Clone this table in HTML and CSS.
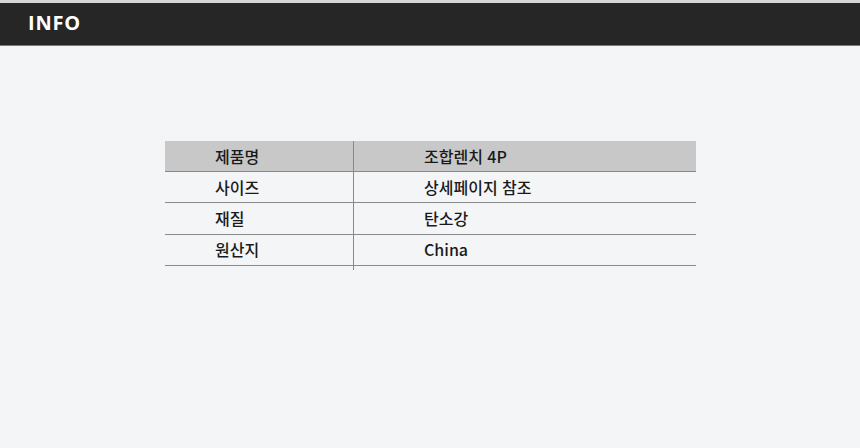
FILE: index.html
```html
<!DOCTYPE html>
<html lang="ko">
<head>
<meta charset="utf-8">
<title>INFO</title>
<link rel="stylesheet" href="styles.css">
</head>
<body>
<header class="topbar"><h1 class="title">INFO</h1></header>
<main class="content">
  <div class="info-table">
    <div class="cell key head">제품명</div><div class="cell val head">조합렌치 4P</div>
    <div class="cell key">사이즈</div><div class="cell val">상세페이지 참조</div>
    <div class="cell key">재질</div><div class="cell val">탄소강</div>
    <div class="cell key">원산지</div><div class="cell val">China</div>
    <div class="tail key"></div><div class="tail"></div>
  </div>
</main>
</body>
</html>
```
FILE: styles.css
```css
* { box-sizing: border-box; }
html, body { margin: 0; padding: 0; }
body {
  width: 860px;
  height: 448px;
  background: #f4f5f7;
  font-family: "Noto Sans CJK KR", "Noto Sans", sans-serif;
  color: #1a1a1a;
  overflow: hidden;
}
.topbar {
  border-top: 3px solid #d6d6d6;
  height: 46px;
  background: #262626;
  border-bottom: 1px solid #7a7a7a;
  display: flex;
  align-items: center;
  padding-left: 28px;
}
.title {
  margin: 0;
  color: #fff;
  font-family: "Open Sans", "Noto Sans", sans-serif;
  font-weight: 700;
  font-size: 20px;
  letter-spacing: 0.8px;
  line-height: 1;
  padding-bottom: 2px;
}
.content {
  padding-top: 95px;
  padding-left: 165px;
}
.info-table {
  width: 531px;
  display: grid;
  grid-template-columns: 189px 1fr;
}
.cell {
  height: 31.4px;
  display: flex;
  align-items: center;
  font-size: 16px;
  font-weight: 500;
  line-height: 1;
  border-bottom: 1px solid #8a8a8a;
  padding-bottom: 1px;
}
.cell.head { background: #c8c8c8; height: 31px; }
.key { padding-left: 50px; border-right: 1px solid #8a8a8a; }
.val { padding-left: 70px; }
.tail { height: 4px; }
```
